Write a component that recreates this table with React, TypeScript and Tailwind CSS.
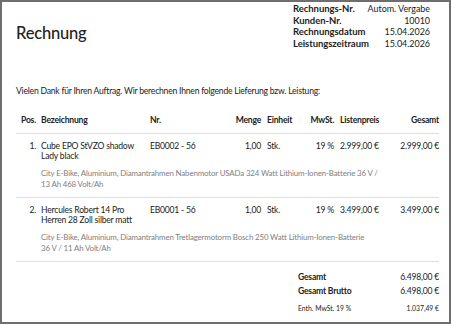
const meta = [
  ["Rechnungs-Nr.", "Autom. Vergabe"],
  ["Kunden-Nr.", "10010"],
  ["Rechnungsdatum", "15.04.2026"],
  ["Leistungszeitraum", "15.04.2026"],
];

const items = [
  {
    pos: "1.",
    name: ["Cube EPO StVZO shadow", "Lady black"],
    nr: "EB0002 - 56",
    price: "2.999,00 €",
    desc: ["City E-Bike, Aluminium, Diamantrahmen Nabenmotor USADa 324 Watt Lithium-Ionen-Batterie 36 V /", "13 Ah 468 Volt/Ah"],
  },
  {
    pos: "2.",
    name: ["Hercules Robert 14 Pro", "Herren 28 Zoll silber matt"],
    nr: "EB0001 - 56",
    price: "3.499,00 €",
    desc: ["City E-Bike, Aluminium, Diamantrahmen Tretlagermotorm Bosch 250 Watt Lithium-Ionen-Batterie", "36 V / 11 Ah Volt/Ah"],
  },
];

const cols = "grid grid-cols-[25px_109px_70px_41px_39px_34px_61px_44px] whitespace-nowrap";

export default function App() {
  return (
    <div className="w-[451px] h-[324px] border-2 border-[#6e6e6e] bg-white text-[#222] font-['Lato',sans-serif] overflow-hidden">
      <div className="flex justify-between pl-[14px] pr-[19px]">
        <h1 className="mt-[19px] text-[16.5px] tracking-[-0.2px] font-medium leading-[24px]">Rechnung</h1>
        <div className="mt-[1px] w-[137px] text-[9px] leading-[11.7px] tracking-[-0.05px]">
          {meta.map(([k, v]) => (
            <div key={k} className="flex justify-between">
              <span className="font-bold text-[9.5px]">{k}</span>
              <span>{v}</span>
            </div>
          ))}
        </div>
      </div>

      <div className="pl-[14px] pr-[10px] text-[8.6px] tracking-[-0.22px]">
        <p className="mt-[35px] leading-[13px]">
          Vielen Dank für Ihren Auftrag. Wir berechnen Ihnen folgende Lieferung bzw. Leistung:
        </p>

        <div className={`${cols} mt-[16.5px] pb-[5.5px] border-b border-[#ddd] font-bold leading-[13px]`}>
          <div className="text-right pr-[5px]">Pos.</div>
          <div>Bezeichnung</div>
          <div>Nr.</div>
          <div className="text-right">Menge</div>
          <div className="pl-[6px]">Einheit</div>
          <div className="text-right">MwSt.</div>
          <div className="pl-[6px]">Listenpreis</div>
          <div className="text-right">Gesamt</div>
        </div>

        {items.map((it) => (
          <div key={it.pos} className="border-b border-[#ddd] pt-[7px] pb-[6.5px]">
            <div className={`${cols} leading-[10.5px]`}>
              <div className="text-right pr-[5px]">{it.pos}</div>
              <div>
                {it.name[0]}
                <br />
                {it.name[1]}
              </div>
              <div>{it.nr}</div>
              <div className="text-right">1,00</div>
              <div className="pl-[6px]">Stk.</div>
              <div className="text-right">19 %</div>
              <div className="pl-[6px]">{it.price}</div>
              <div className="text-right">{it.price}</div>
            </div>
            <div className="mt-[6.5px] pl-[25px] text-[7.9px] tracking-[-0.15px] leading-[11px] text-[#808080]">
              {it.desc[0]}
              <br />
              {it.desc[1]}
            </div>
          </div>
        ))}

        <div className="ml-auto mt-[8px] w-[141px] leading-[14px]">
          <div className="flex justify-between">
            <span className="font-bold">Gesamt</span>
            <span>6.498,00 €</span>
          </div>
          <div className="flex justify-between">
            <span className="font-bold">Gesamt Brutto</span>
            <span>6.498,00 €</span>
          </div>
          <div className="mt-[5px] flex justify-between text-[6.8px] leading-[10px] tracking-normal">
            <span>Enth. MwSt. 19 %</span>
            <span>1.037,49 €</span>
          </div>
        </div>
      </div>
    </div>
  );
}
